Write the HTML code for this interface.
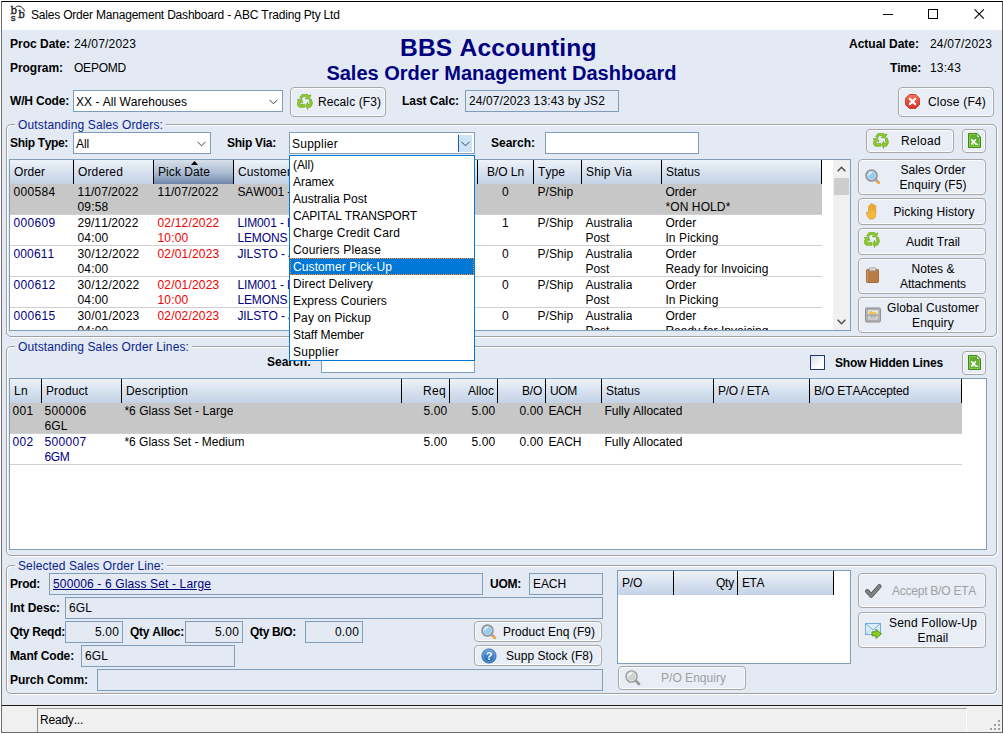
<!DOCTYPE html>
<html><head><meta charset="utf-8"><title>Sales Order Management Dashboard</title>
<style>
*{box-sizing:border-box;margin:0;padding:0}
html,body{width:1003px;height:735px;overflow:hidden;background:#E3EAF4}
body{font-family:"Liberation Sans",Arial,sans-serif;font-size:12px;color:#000;position:relative;font-kerning:none}
.a{position:absolute;white-space:nowrap}
.l{position:absolute;white-space:nowrap;font-weight:bold;line-height:14px}
.t{position:absolute;white-space:nowrap;line-height:14px}
.fld{position:absolute;border:1px solid #7F9DB9;background:#E3EAF4;line-height:14px;padding:3px 0 0 3px;white-space:nowrap;overflow:hidden}
.inp{position:absolute;border:1px solid #7F9DB9;background:#fff;line-height:14px;padding:4px 0 0 2px;white-space:nowrap;overflow:hidden}
.btn{position:absolute;border:1px solid #A8A8A8;border-radius:4px;background:#E8EDF6;white-space:nowrap;box-shadow:inset 0 0 0 1px rgba(255,255,255,.75)}
.btn span.x{position:absolute;line-height:15px;white-space:nowrap}
.btn svg{position:absolute}
.dis{color:#A0A0A0}
.grp{position:absolute;border:1px solid #A0A0A0;border-radius:5px;box-shadow:inset 1px 1px 0 #fff, 1px 1px 0 #fff}
.grp>span.cap{position:absolute;left:8px;top:-7px;background:#E3EAF4;color:#0A1E8C;padding:0 3px 0 3px;line-height:14px;white-space:nowrap}
.grid{position:absolute;background:#fff;border:1px solid #7F9DB9;overflow:hidden}
.hd{position:absolute;top:0;height:24px;background:linear-gradient(#EEF3F9 0%,#D9E3F0 45%,#C3D2E6 100%);border-right:1px solid #000;line-height:14px;padding:5px 0 0 4px;white-space:nowrap;overflow:hidden}
.hd.r{text-align:right;padding:5px 3px 0 0}
.hd.m{text-align:center;padding:5px 0 0 0}
.row{position:absolute;left:0;height:31px;border-bottom:1px solid #D0D0D0}
.c{position:absolute;top:1px;line-height:15px;white-space:nowrap;overflow:hidden;margin-left:-0.6px}
.sel{background:#C7C7C7}
.blue{color:#000080}.red{color:#F00000}
.opt{position:absolute;left:0;width:184px;height:17px;line-height:15px;padding:2px 0 0 3px;white-space:nowrap}
</style></head><body>

<div class="a" style="left:0;top:0;width:1003px;height:735px;background:#fff"></div>
<div class="a" style="left:1px;top:1px;width:1002px;height:732px;background:#E3EAF4;border:1px solid #222;border-color:#000 #5a5a5a #6a6a6a #6e6e6e"></div>
<div class="a" style="left:2px;top:2px;width:1000px;height:28px;background:#fff"></div>
<div class="a" style="left:6px;top:2px;width:26px;height:24px;font-family:'DejaVu Serif',serif;color:#1a1a1a;letter-spacing:0;-webkit-text-stroke:0.35px #1a1a1a">
<span class="a" style="left:4.4px;top:3.2px;font-size:10.2px;line-height:12px">b</span>
<span class="a" style="left:12.3px;top:7.2px;font-size:10.2px;line-height:12px">b</span>
<span class="a" style="left:4.8px;top:10.2px;font-size:9.6px;line-height:11px">s</span>
<svg class="a" style="left:0;top:0" width="26" height="24" viewBox="0 0 26 24"><path d="M9.4 5.4 C11.6 3.2 16.6 3.4 18.6 9.4" fill="none" stroke="#1a1a1a" stroke-width="1"/></svg>
</div>
<div id="title" class="a" style="left:31px;top:8px;font-size:12px;line-height:14px;letter-spacing:-0.2px">Sales Order Management Dashboard - ABC Trading Pty Ltd</div>
<svg class="a" style="left:878px;top:4px" width="116" height="22" viewBox="0 0 116 22">
<path d="M5 10.5h10" stroke="#000" stroke-width="1" fill="none"/>
<rect x="50.5" y="5.5" width="9" height="9" stroke="#000" stroke-width="1" fill="none"/>
<path d="M96.5 5.300l9.400 9.400M105.900 5.300l-9.400 9.400" stroke="#000" stroke-width="1.100" fill="none"/>
</svg>
<div class="l" style="left:10px;top:37px"><span style="letter-spacing:-0.002px">Proc Date:</span></div>
<div class="t" style="left:74px;top:37px"><span style="letter-spacing:0.194px">24/07/2023</span></div>
<div class="l" style="left:10px;top:61px"><span style="letter-spacing:-0.043px">Program:</span></div>
<div class="t" style="left:74px;top:61px"><span style="letter-spacing:-0.223px">OEPOMD</span></div>
<div class="a" id="h1" style="left:0;width:996.7px;top:33px;text-align:center;font-weight:bold;font-size:24.6px;letter-spacing:0.2px;line-height:30px;color:#000080">BBS Accounting</div>
<div class="a" id="h2" style="left:0;width:1002.9px;top:61px;text-align:center;font-weight:bold;font-size:20px;line-height:24px;color:#000080">Sales Order Management Dashboard</div>
<div class="l" style="right:84px;top:37px"><span style="letter-spacing:-0.001px">Actual Date:</span></div>
<div class="t" style="left:930px;top:37px"><span style="letter-spacing:0.194px">24/07/2023</span></div>
<div class="l" style="right:82px;top:61px"><span style="letter-spacing:-0.201px">Time:</span></div>
<div class="t" style="left:930px;top:61px"><span style="letter-spacing:0.194px">13:43</span></div>
<div class="l" style="left:10px;top:94px"><span style="letter-spacing:-0.184px">W/H Code:</span></div>
<div class="inp" style="left:73px;top:90px;width:210px;height:22px;border-color:#7F9DB9"><span style="letter-spacing:0.015px">XX - All Warehouses</span><svg class="a" style="right:4px;top:8px" width="9" height="6" viewBox="0 0 9 6"><path d="M.5.8l4 4 4-4" fill="none" stroke="#444" stroke-width="1"/></svg></div>
<div class="btn" style="left:290px;top:87px;width:96px;height:30px"><svg style="left:6px;top:6px" width="16" height="16" viewBox="0 0 16 16">
<g fill="#8FCB28" stroke="#5E9E14" stroke-width="0.6" stroke-linejoin="round">
<path d="M2.7 3.8L4.6.9Q5 .3 5.7.3H10Q10.8.3 11.2 1l.4.8L14 .9 12.2 5 8 4.6l1.8-1.2-.6-.8H6.2L5 4.6z"/>
<path d="M12.2 5.8l2.1-.9 1 3.7q.3 1.200-.3 2.200L13.600 13.200H10.700v2.200L8.700 11.700l2-3.500v2.100h1.600l.7-1.100z"/>
<path d="M7.700 10.400v2.900H3Q1.600 13.300 1 12L.4 10.400Q0 9.400.6 8.400L1.400 7 .2 5.600l4.600-.1 1.100 3.100L4 8 3 9.800q-.2.600.4.600z"/>
</g></svg><span class="x" style="left:27px;top:7px"><span style="letter-spacing:0.090px">Recalc (F3)</span></span></div>
<div class="l" style="left:402px;top:94px"><span style="letter-spacing:-0.035px">Last Calc:</span></div>
<div class="fld" style="left:465px;top:90px;width:154px;height:22px"><span style="letter-spacing:0.111px">24/07/2023 13:43 by JS2</span></div>
<div class="btn" style="left:898px;top:87px;width:96px;height:30px"><svg style="left:6px;top:6px" width="15" height="15" viewBox="0 0 16 16">
<defs><linearGradient id="cg" x1="0" y1="0" x2="0" y2="1"><stop offset="0" stop-color="#F47A62"/><stop offset=".5" stop-color="#E84A3C"/><stop offset="1" stop-color="#D6322A"/></linearGradient></defs>
<path d="M4.600.6h6.800l4 4v6.800l-4 4H4.600l-4-4V4.600z" fill="url(#cg)" stroke="#C8362C" stroke-width="1"/>
<path d="M5.200 5.200l5.600 5.600M10.800 5.200l-5.600 5.600" stroke="#fff" stroke-width="2.300" stroke-linecap="round"/>
</svg><span class="x" style="left:29px;top:7px"><span style="letter-spacing:0.199px">Close (F4)</span></span></div>
<div class="grp" style="left:6px;top:124px;width:991px;height:213px"><span class="cap"><span style="letter-spacing:0.144px">Outstanding Sales Orders:</span></span></div>
<div class="l" style="left:10px;top:136px"><span style="letter-spacing:-0.334px">Ship Type:</span></div>
<div class="inp" style="left:73px;top:132px;width:138px;height:22px;border-color:#7F9DB9"><span style="letter-spacing:-0.112px">All</span><svg class="a" style="right:4px;top:8px" width="9" height="6" viewBox="0 0 9 6"><path d="M.5.8l4 4 4-4" fill="none" stroke="#444" stroke-width="1"/></svg></div>
<div class="l" style="left:227px;top:136px"><span style="letter-spacing:-0.260px">Ship Via:</span></div>
<div class="inp" style="left:289px;top:132px;width:186px;height:22px;border-color:#7F9DB9"><span style="letter-spacing:0.247px">Supplier</span><div class="a" style="right:2px;top:2px;width:14px;height:17px;background:#CCE4F7;border-left:1px solid #1C5FA8"></div><svg class="a" style="right:4px;top:8px" width="9" height="6" viewBox="0 0 9 6"><path d="M.5.8l4 4 4-4" fill="none" stroke="#444" stroke-width="1"/></svg></div>
<div class="l" style="left:491px;top:136px"><span style="letter-spacing:-0.003px">Search:</span></div>
<div class="inp" style="left:545px;top:132px;width:154px;height:22px"></div>
<div class="btn" style="left:866px;top:129px;width:88px;height:24px"><svg style="left:6px;top:3px" width="16" height="16" viewBox="0 0 16 16">
<g fill="#8FCB28" stroke="#5E9E14" stroke-width="0.6" stroke-linejoin="round">
<path d="M2.7 3.8L4.6.9Q5 .3 5.7.3H10Q10.8.3 11.2 1l.4.8L14 .9 12.2 5 8 4.6l1.8-1.2-.6-.8H6.2L5 4.6z"/>
<path d="M12.2 5.8l2.1-.9 1 3.7q.3 1.200-.3 2.200L13.600 13.200H10.700v2.200L8.700 11.700l2-3.500v2.100h1.600l.7-1.100z"/>
<path d="M7.700 10.400v2.900H3Q1.600 13.300 1 12L.4 10.400Q0 9.400.6 8.400L1.400 7 .2 5.600l4.600-.1 1.100 3.100L4 8 3 9.800q-.2.600.4.600z"/>
</g></svg><span class="x" style="left:34px;top:4px"><span style="letter-spacing:0.329px">Reload</span></span></div>
<div class="btn" style="left:962px;top:129px;width:24px;height:24px"><svg style="left:5px;top:3px" width="13" height="15" viewBox="0 0 13 15">
<path d="M.5.500h8.500l3.500 3.500v10.500H.5z" fill="#64AE30" stroke="#3F8A14" stroke-width="1"/>
<path d="M1.500 1.500h7l3 3v9h-10z" fill="none" stroke="#8FD058" stroke-width=".8"/>
<path d="M8.800.8v3.400h3.400z" fill="#fff" stroke="#3F8A14" stroke-width=".6"/>
<path d="M3.200 6.400l5.200 5M8 6.400l-4.800 4.600" stroke="#fff" stroke-width="1.500" fill="none"/>
<path d="M3 11h3M7.500 11.400h2.800" stroke="#fff" stroke-width="1.200"/>
</svg><span class="x" style="left:0px;top:0px"></span></div>
<div class="btn" style="left:858px;top:159px;width:128px;height:36px"><svg style="left:6px;top:9px" width="16" height="16" viewBox="0 0 16 16">
<path d="M10.500 10.500l3 3" stroke="#A9A9A9" stroke-width="2.800" stroke-linecap="round"/>
<path d="M12.800 12.800l1 1" stroke="#EFA43A" stroke-width="2.600" stroke-linecap="round"/>
<circle cx="6.500" cy="6.500" r="5.400" fill="#DCEBF8" stroke="#949494" stroke-width="1.800"/>
<circle cx="6.500" cy="6.500" r="3.900" fill="#96CBF2"/>
<path d="M3.900 5.800a2.800 2.800 0 0 1 2.600-2.300" stroke="#E4F3FD" stroke-width="1.300" fill="none" stroke-linecap="round"/>
</svg><span class="x" style="left:21px;top:3px;width:106px;text-align:center"><span style="letter-spacing:0.089px">Sales Order</span><br><span style="letter-spacing:0.082px">Enquiry (F5)</span></span></div>
<div class="btn" style="left:858px;top:198px;width:128px;height:27px"><svg style="left:7px;top:4px" width="13" height="17" viewBox="0 0 13 17">
<path d="M2.600 9.500V3.300a.9.900 0 0 1 1.800 0V1.500a.9.900 0 0 1 1.800 0V1.900a.9.900 0 0 1 1.800 0V3.300a.9.900 0 0 1 1.800 0V10.500c0 3.300-1.200 5.700-4.200 5.700-2.200 0-3.200-1-4.200-3L.4 10.500c-.5-1 .5-1.900 1.300-1.100z" fill="#F5B83E" stroke="#D8921E" stroke-width="0.7" stroke-linejoin="round"/>
<path d="M4.400 3.300v4.500M6.200 1.900v5.900M8 3.300v4.500" stroke="#D8921E" stroke-width="0.6" fill="none"/>
</svg><span class="x" style="left:22px;top:6px;width:106px;text-align:center"><span style="letter-spacing:0.110px">Picking History</span></span></div>
<div class="btn" style="left:858px;top:228px;width:128px;height:27px"><svg style="left:5px;top:3px" width="16" height="16" viewBox="0 0 16 16">
<g fill="#8FCB28" stroke="#5E9E14" stroke-width="0.6" stroke-linejoin="round">
<path d="M2.7 3.8L4.6.9Q5 .3 5.7.3H10Q10.8.3 11.2 1l.4.8L14 .9 12.2 5 8 4.6l1.8-1.2-.6-.8H6.2L5 4.6z"/>
<path d="M12.2 5.8l2.1-.9 1 3.7q.3 1.200-.3 2.200L13.600 13.200H10.700v2.200L8.700 11.700l2-3.500v2.100h1.600l.7-1.100z"/>
<path d="M7.700 10.400v2.900H3Q1.600 13.300 1 12L.4 10.400Q0 9.400.6 8.400L1.400 7 .2 5.600l4.600-.1 1.100 3.100L4 8 3 9.800q-.2.600.4.600z"/>
</g></svg><span class="x" style="left:21px;top:6px;width:106px;text-align:center"><span style="letter-spacing:-0.002px">Audit Trail</span></span></div>
<div class="btn" style="left:858px;top:258px;width:128px;height:36px"><svg style="left:7px;top:8px" width="13" height="16" viewBox="0 0 14 16" preserveAspectRatio="none">
<rect x=".5" y="2.5" width="13" height="13" rx="1" fill="#B97C46" stroke="#A06A38" stroke-width="1"/>
<rect x="3.5" y=".8" width="7" height="3" rx=".8" fill="#D9D9D9" stroke="#A0A0A0" stroke-width=".8"/>
<path d="M1.5 4.2v10.4" stroke="#D09A66" stroke-width="1"/>
</svg><span class="x" style="left:21px;top:3px;width:106px;text-align:center"><span style="letter-spacing:0.045px">Notes &amp;</span><br><span style="letter-spacing:-0.063px">Attachments</span></span></div>
<div class="btn" style="left:858px;top:297px;width:128px;height:36px"><svg style="left:6px;top:9px" width="16" height="16" viewBox="0 0 17 16">
<rect x=".5" y=".5" width="16" height="15" rx="1.5" fill="#B5B5B5" stroke="#8C8C8C" stroke-width="1"/>
<rect x="2.5" y="2.5" width="12" height="5" fill="#E8E8E8" stroke="#9A9A9A" stroke-width=".6"/>
<path d="M4.5 4h3l.6 1h4v2h-7.6z" fill="#EDC436"/>
<rect x="2.5" y="8.5" width="12" height="5" fill="#D0D0D0" stroke="#9A9A9A" stroke-width=".6"/>
<rect x="6.5" y="9.5" width="4" height="1.6" fill="#F4F4F4" stroke="#888" stroke-width=".5"/>
</svg><span class="x" style="left:21px;top:3px;width:106px;text-align:center"><span style="letter-spacing:0.131px">Global Customer</span><br><span style="letter-spacing:0.188px">Enquiry</span></span></div>
<div class="grid" style="left:9px;top:159px;width:842px;height:172px">
<div class="hd" style="left:0px;width:64px"><span style="letter-spacing:0.065px">Order</span></div>
<div class="hd" style="left:64px;width:80px"><span style="letter-spacing:0.140px">Ordered</span></div>
<div class="hd" style="left:144px;width:80px;background:linear-gradient(#D8E0EB 0%,#A9BAD0 55%,#6F87AA 100%)"><span style="letter-spacing:0.072px">Pick Date</span></div>
<div class="hd" style="left:224px;width:244px"><span style="letter-spacing:0.123px">Customer</span></div>
<div class="hd m" style="left:468px;width:56px"><span style="letter-spacing:-0.059px">B/O Ln</span></div>
<div class="hd" style="left:524px;width:48px"><span style="letter-spacing:0.081px">Type</span></div>
<div class="hd" style="left:572px;width:80px"><span style="letter-spacing:0.163px">Ship Via</span></div>
<div class="hd" style="left:652px;width:160px"><span style="letter-spacing:-0.003px">Status</span></div>
<svg class="a" style="left:181px;top:1px" width="7" height="4" viewBox="0 0 7 4"><path d="M0 4L3.500 0 7 4z" fill="#000"/></svg>
<div class="row sel" style="top:24px;width:812px">
<div class="c" style="left:4px"><span style="letter-spacing:0.326px">000584</span></div>
<div class="c" style="left:68px"><span style="letter-spacing:0.094px">11/07/2022</span><br><span style="letter-spacing:0.194px">09:58</span></div>
<div class="c" style="left:148px"><span style="letter-spacing:0.094px">11/07/2022</span><br></div>
<div class="c" style="left:228px"><span style="letter-spacing:-0.113px">SAW001 - </span><br></div>
<div class="c" style="left:468px;width:56px;text-align:center">0</div>
<div class="c" style="left:528px"><span style="letter-spacing:0.107px">P/Ship</span></div>
<div class="c" style="left:576px"><br></div>
<div class="c" style="left:656px"><span style="letter-spacing:0.065px">Order</span><br><span style="letter-spacing:0.110px">*ON HOLD*</span></div>
</div>
<div class="row" style="top:55px;width:812px">
<div class="c blue" style="left:4px"><span style="letter-spacing:0.326px">000609</span></div>
<div class="c" style="left:68px"><span style="letter-spacing:0.094px">29/11/2022</span><br><span style="letter-spacing:0.194px">04:00</span></div>
<div class="c red" style="left:148px"><span style="letter-spacing:0.194px">02/12/2022</span><br><span style="letter-spacing:0.194px">10:00</span></div>
<div class="c blue" style="left:228px"><span style="letter-spacing:-0.122px">LIM001 - LIMES</span><br><span style="letter-spacing:-0.113px">LEMONS</span></div>
<div class="c" style="left:468px;width:56px;text-align:center">1</div>
<div class="c" style="left:528px"><span style="letter-spacing:0.107px">P/Ship</span></div>
<div class="c" style="left:576px"><span style="letter-spacing:0.035px">Australia</span><br><span style="letter-spacing:-0.003px">Post</span></div>
<div class="c" style="left:656px"><span style="letter-spacing:0.065px">Order</span><br><span style="letter-spacing:0.097px">In Picking</span></div>
</div>
<div class="row" style="top:86px;width:812px">
<div class="c blue" style="left:4px"><span style="letter-spacing:0.160px">000611</span></div>
<div class="c" style="left:68px"><span style="letter-spacing:0.194px">30/12/2022</span><br><span style="letter-spacing:0.194px">04:00</span></div>
<div class="c red" style="left:148px"><span style="letter-spacing:0.194px">02/01/2023</span><br></div>
<div class="c blue" style="left:228px"><span style="letter-spacing:-0.073px">JILSTO - JILLS</span><br></div>
<div class="c" style="left:468px;width:56px;text-align:center">0</div>
<div class="c" style="left:528px"><span style="letter-spacing:0.107px">P/Ship</span></div>
<div class="c" style="left:576px"><span style="letter-spacing:0.035px">Australia</span><br><span style="letter-spacing:-0.003px">Post</span></div>
<div class="c" style="left:656px"><span style="letter-spacing:0.065px">Order</span><br><span style="letter-spacing:0.015px">Ready for Invoicing</span></div>
</div>
<div class="row" style="top:117px;width:812px">
<div class="c blue" style="left:4px"><span style="letter-spacing:0.326px">000612</span></div>
<div class="c" style="left:68px"><span style="letter-spacing:0.194px">30/12/2022</span><br><span style="letter-spacing:0.194px">04:00</span></div>
<div class="c red" style="left:148px"><span style="letter-spacing:0.194px">02/01/2023</span><br><span style="letter-spacing:0.194px">10:00</span></div>
<div class="c blue" style="left:228px"><span style="letter-spacing:-0.122px">LIM001 - LIMES</span><br><span style="letter-spacing:-0.113px">LEMONS</span></div>
<div class="c" style="left:468px;width:56px;text-align:center">0</div>
<div class="c" style="left:528px"><span style="letter-spacing:0.107px">P/Ship</span></div>
<div class="c" style="left:576px"><span style="letter-spacing:0.035px">Australia</span><br><span style="letter-spacing:-0.003px">Post</span></div>
<div class="c" style="left:656px"><span style="letter-spacing:0.065px">Order</span><br><span style="letter-spacing:0.097px">In Picking</span></div>
</div>
<div class="row" style="top:148px;width:812px">
<div class="c blue" style="left:4px"><span style="letter-spacing:0.326px">000615</span></div>
<div class="c" style="left:68px"><span style="letter-spacing:0.194px">30/01/2023</span><br><span style="letter-spacing:0.194px">04:00</span></div>
<div class="c red" style="left:148px"><span style="letter-spacing:0.194px">02/02/2023</span><br></div>
<div class="c blue" style="left:228px"><span style="letter-spacing:-0.073px">JILSTO - JILLS</span><br></div>
<div class="c" style="left:468px;width:56px;text-align:center">0</div>
<div class="c" style="left:528px"><span style="letter-spacing:0.107px">P/Ship</span></div>
<div class="c" style="left:576px"><span style="letter-spacing:0.035px">Australia</span><br><span style="letter-spacing:-0.003px">Post</span></div>
<div class="c" style="left:656px"><span style="letter-spacing:0.065px">Order</span><br><span style="letter-spacing:0.015px">Ready for Invoicing</span></div>
</div>
<div class="a" style="left:823px;top:0;width:17px;height:170px;background:#F0F0F0"></div>
<div class="a" style="left:824px;top:18px;width:15px;height:17px;background:#CDCDCD"></div>
<svg class="a" style="left:827px;top:6px" width="9" height="6" viewBox="0 0 9 6"><path d="M.7 5.2l3.8-3.9 3.8 3.9" fill="none" stroke="#505050" stroke-width="1.5"/></svg>
<svg class="a" style="left:827px;top:159px" width="9" height="6" viewBox="0 0 9 6"><path d="M.7.8l3.8 3.9L8.3.8" fill="none" stroke="#505050" stroke-width="1.5"/></svg>
</div>
<div class="grp" style="left:6px;top:346px;width:991px;height:210px"><span class="cap"><span style="letter-spacing:0.119px">Outstanding Sales Order Lines:</span></span></div>
<div class="l" style="left:267px;top:355px"><span style="letter-spacing:-0.003px">Search:</span></div>
<div class="inp" style="left:321px;top:351px;width:154px;height:22px"></div>
<div class="a" style="left:810px;top:355px;width:15px;height:15px;background:linear-gradient(135deg,#D8DCE4,#fff 70%);border:1px solid #1C3A6E"></div>
<div class="l" style="left:835px;top:356px"><span style="letter-spacing:-0.157px">Show Hidden Lines</span></div>
<div class="btn" style="left:962px;top:351px;width:24px;height:24px"><svg style="left:5px;top:3px" width="13" height="15" viewBox="0 0 13 15">
<path d="M.5.500h8.500l3.500 3.500v10.500H.5z" fill="#64AE30" stroke="#3F8A14" stroke-width="1"/>
<path d="M1.500 1.500h7l3 3v9h-10z" fill="none" stroke="#8FD058" stroke-width=".8"/>
<path d="M8.800.8v3.400h3.400z" fill="#fff" stroke="#3F8A14" stroke-width=".6"/>
<path d="M3.200 6.400l5.200 5M8 6.400l-4.800 4.600" stroke="#fff" stroke-width="1.500" fill="none"/>
<path d="M3 11h3M7.500 11.400h2.800" stroke="#fff" stroke-width="1.200"/>
</svg><span class="x" style="left:0px;top:0px"></span></div>
<div class="grid" style="left:9px;top:378px;width:978px;height:172px">
<div class="hd" style="left:0px;width:32px"><span style="letter-spacing:0.326px">Ln</span></div>
<div class="hd" style="left:32px;width:80px"><span style="letter-spacing:0.092px">Product</span></div>
<div class="hd" style="left:112px;width:280px"><span style="letter-spacing:0.180px">Description</span></div>
<div class="hd r" style="left:392px;width:48px"><span style="letter-spacing:0.329px">Req</span></div>
<div class="hd r" style="left:440px;width:48px"><span style="letter-spacing:-0.002px">Alloc</span></div>
<div class="hd r" style="left:488px;width:48px"><span style="letter-spacing:-0.224px">B/O</span></div>
<div class="hd" style="left:536px;width:56px"><span style="letter-spacing:-0.332px">UOM</span></div>
<div class="hd" style="left:592px;width:112px"><span style="letter-spacing:-0.003px">Status</span></div>
<div class="hd" style="left:704px;width:96px"><span style="letter-spacing:-0.335px">P/O / ETA</span></div>
<div class="hd" style="left:800px;width:152px"><span style="letter-spacing:-0.158px">B/O ETAAccepted</span></div>
<div class="row sel" style="top:24px;width:952px">
<div class="c" style="left:3px"><span style="letter-spacing:0.326px">001</span></div>
<div class="c" style="left:35px"><span style="letter-spacing:0.326px">500006</span><br><span style="letter-spacing:0.106px">6GL</span></div>
<div class="c" style="left:115px"><span style="letter-spacing:0.047px">*6 Glass Set - Large</span></div>
<div class="c" style="left:392px;width:46px;text-align:right"><span style="letter-spacing:0.161px">5.00</span></div>
<div class="c" style="left:440px;width:46px;text-align:right"><span style="letter-spacing:0.161px">5.00</span></div>
<div class="c" style="left:488px;width:46px;text-align:right"><span style="letter-spacing:0.161px">0.00</span></div>
<div class="c" style="left:539px"><span style="letter-spacing:-0.085px">EACH</span></div>
<div class="c" style="left:595px"><span style="letter-spacing:-0.002px">Fully Allocated</span></div>
</div>
<div class="row" style="top:55px;width:952px">
<div class="c blue" style="left:3px"><span style="letter-spacing:0.326px">002</span></div>
<div class="c blue" style="left:35px"><span style="letter-spacing:0.326px">500007</span><br><span style="letter-spacing:-0.335px">6GM</span></div>
<div class="c" style="left:115px"><span style="letter-spacing:-0.002px">*6 Glass Set - Medium</span></div>
<div class="c" style="left:392px;width:46px;text-align:right"><span style="letter-spacing:0.161px">5.00</span></div>
<div class="c" style="left:440px;width:46px;text-align:right"><span style="letter-spacing:0.161px">5.00</span></div>
<div class="c" style="left:488px;width:46px;text-align:right"><span style="letter-spacing:0.161px">0.00</span></div>
<div class="c" style="left:539px"><span style="letter-spacing:-0.085px">EACH</span></div>
<div class="c" style="left:595px"><span style="letter-spacing:-0.002px">Fully Allocated</span></div>
</div>
</div>
<div class="grp" style="left:6px;top:565px;width:991px;height:129px"><span class="cap"><span style="letter-spacing:0.099px">Selected Sales Order Line:</span></span></div>
<div class="l" style="left:10px;top:577px"><span style="letter-spacing:-0.266px">Prod:</span></div>
<div class="fld" style="left:49px;top:573px;width:434px;height:22px;color:#000080"><span style="text-decoration:underline"><span style="letter-spacing:0.140px">500006 - 6 Glass Set - Large</span></span></div>
<div class="l" style="left:490px;top:577px"><span style="letter-spacing:-0.248px">UOM:</span></div>
<div class="fld" style="left:529px;top:573px;width:74px;height:22px"><span style="letter-spacing:-0.085px">EACH</span></div>
<div class="l" style="left:10px;top:601px"><span style="letter-spacing:-0.075px">Int Desc:</span></div>
<div class="fld" style="left:65px;top:597px;width:538px;height:22px"><span style="letter-spacing:0.106px">6GL</span></div>
<div class="l" style="left:10px;top:625px"><span style="letter-spacing:-0.259px">Qty Reqd:</span></div>
<div class="fld" style="left:65px;top:621px;width:58px;height:22px;text-align:right;padding-right:3px"><span style="letter-spacing:0.161px">5.00</span></div>
<div class="l" style="left:130px;top:625px"><span style="letter-spacing:-0.267px">Qty Alloc:</span></div>
<div class="fld" style="left:185px;top:621px;width:58px;height:22px;text-align:right;padding-right:3px"><span style="letter-spacing:0.161px">5.00</span></div>
<div class="l" style="left:250px;top:625px"><span style="letter-spacing:-0.333px">Qty B/O:</span></div>
<div class="fld" style="left:305px;top:621px;width:58px;height:22px;text-align:right;padding-right:3px"><span style="letter-spacing:0.161px">0.00</span></div>
<div class="l" style="left:10px;top:649px"><span style="letter-spacing:-0.133px">Manf Code:</span></div>
<div class="fld" style="left:81px;top:645px;width:154px;height:22px"><span style="letter-spacing:0.106px">6GL</span></div>
<div class="l" style="left:10px;top:673px"><span style="letter-spacing:-0.061px">Purch Comm:</span></div>
<div class="fld" style="left:97px;top:669px;width:506px;height:22px"></div>
<div class="btn" style="left:474px;top:621px;width:128px;height:21px"><svg style="left:6px;top:2px" width="16" height="16" viewBox="0 0 16 16">
<path d="M10.500 10.500l3 3" stroke="#A9A9A9" stroke-width="2.800" stroke-linecap="round"/>
<path d="M12.800 12.800l1 1" stroke="#EFA43A" stroke-width="2.600" stroke-linecap="round"/>
<circle cx="6.500" cy="6.500" r="5.400" fill="#DCEBF8" stroke="#949494" stroke-width="1.800"/>
<circle cx="6.500" cy="6.500" r="3.900" fill="#96CBF2"/>
<path d="M3.900 5.800a2.800 2.800 0 0 1 2.600-2.300" stroke="#E4F3FD" stroke-width="1.300" fill="none" stroke-linecap="round"/>
</svg><span class="x" style="left:28px;top:3px"><span style="letter-spacing:0.039px">Product Enq (F9)</span></span></div>
<div class="btn" style="left:474px;top:645px;width:128px;height:21px"><svg style="left:6px;top:2px" width="16" height="16" viewBox="0 0 16 16">
<defs><linearGradient id="hg" x1="0" y1="0" x2="0" y2="1"><stop offset="0" stop-color="#5FA2E2"/><stop offset="1" stop-color="#1F5FAE"/></linearGradient></defs>
<circle cx="8" cy="8" r="7.100" fill="url(#hg)" stroke="#2A62A6" stroke-width="0.800"/>
<circle cx="8" cy="8" r="5.900" fill="none" stroke="#7DB4EA" stroke-width="0.700"/>
<text x="8" y="12" text-anchor="middle" font-family="Liberation Sans" font-weight="bold" font-size="11" fill="#fff">?</text>
</svg><span class="x" style="left:31px;top:3px"><span style="letter-spacing:0.020px">Supp Stock (F8)</span></span></div>
<div class="grid" style="left:617px;top:570px;width:234px;height:94px">
<div class="hd" style="left:0px;width:56px"><span style="letter-spacing:-0.224px">P/O</span></div>
<div class="hd r" style="left:56px;width:64px"><span style="letter-spacing:-0.223px">Qty</span></div>
<div class="hd" style="left:120px;width:96px"><span style="letter-spacing:-0.446px">ETA</span></div>
</div>
<div class="btn dis" style="left:618px;top:666px;width:128px;height:24px"><svg style="left:6px;top:3px" width="16" height="16" viewBox="0 0 16 16">
<path d="M10 10l4 4" stroke="#9A9A9A" stroke-width="2.8" stroke-linecap="round"/>
<circle cx="6.5" cy="6.5" r="5.6" fill="#E6E6E6" stroke="#9A9A9A" stroke-width="1.4"/>
<circle cx="6.5" cy="6.5" r="4" fill="#D2D2D2"/>
<path d="M3.8 5.8a3 3 0 0 1 2.8-2.4" stroke="#fff" stroke-width="1.2" fill="none" stroke-linecap="round"/>
</svg><span class="x" style="left:42px;top:4px"><span style="letter-spacing:0.028px">P/O Enquiry</span></span></div>
<div class="btn dis" style="left:858px;top:573px;width:128px;height:35px"><svg style="left:6px;top:9px" width="17" height="17" viewBox="0 0 19 19">
<path d="M2.600 9.200L7 14.200 16 3.800" fill="none" stroke="#555" stroke-width="4.800" stroke-linecap="round" stroke-linejoin="round"/>
<path d="M2.600 9.200L7 14.200 16 3.800" fill="none" stroke="#8E8E8E" stroke-width="2.800" stroke-linecap="round" stroke-linejoin="round"/>
<path d="M2.600 9.200L7 14.200 16 3.800" fill="none" stroke="#6A6A6A" stroke-width="0.800" stroke-linecap="round" stroke-linejoin="round"/>
</svg><span class="x" style="left:33px;top:10px"><span style="letter-spacing:-0.240px">Accept B/O ETA</span></span></div>
<div class="btn" style="left:858px;top:612px;width:128px;height:36px"><svg style="left:6px;top:10px" width="17" height="16" viewBox="0 0 17 16">
<rect x=".5" y=".5" width="15" height="11" fill="#DCEEFC" stroke="#74ABDF" stroke-width="1"/>
<path d="M.8.8l7.2 6 7.2-6" fill="none" stroke="#74ABDF" stroke-width="1"/>
<path d="M.8 11.2l5.4-5M15.2 11.2l-5.4-5" fill="none" stroke="#9CC4E8" stroke-width=".8"/>
<path d="M7 8.800h4V6.200l5.400 4.600L11 15.400V12.800H7z" fill="#8ECB24" stroke="#4A9412" stroke-width=".9" stroke-linejoin="round"/>
</svg><span class="x" style="left:24px;top:3px;width:100px;text-align:center"><span style="letter-spacing:0.188px">Send Follow-Up</span><br><span style="letter-spacing:0.199px">Email</span></span></div>
<div class="a" style="left:2px;top:705px;width:1000px;height:1px;background:#1a1a1a"></div>
<div class="a" style="left:2px;top:706px;width:1000px;height:26px;background:#F0F0F0"></div>
<div class="a" style="left:37px;top:708px;width:930px;height:24px;border-left:1px solid #8C8C8C;border-top:1px solid #A0A0A0;border-right:1px solid #fff"></div>
<div class="t" style="left:40px;top:713px"><span style="letter-spacing:-0.211px">Ready...</span></div>
<svg class="a" style="left:989px;top:719px" width="12" height="12" viewBox="0 0 12 12"><g fill="#A0A0A0">
<rect x="9" y="1" width="2" height="2"/><rect x="9" y="5" width="2" height="2"/><rect x="5" y="5" width="2" height="2"/>
<rect x="9" y="9" width="2" height="2"/><rect x="5" y="9" width="2" height="2"/><rect x="1" y="9" width="2" height="2"/></g></svg>
<div class="a" style="left:289px;top:155px;width:186px;height:206px;background:#fff;border:1px solid #0078D7">
<div class="opt" style="top:0px"><span style="letter-spacing:-0.066px">(All)</span></div>
<div class="opt" style="top:17px"><span style="letter-spacing:-0.057px">Aramex</span></div>
<div class="opt" style="top:34px"><span style="letter-spacing:-0.002px">Australia Post</span></div>
<div class="opt" style="top:51px"><span style="letter-spacing:-0.197px">CAPITAL TRANSPORT</span></div>
<div class="opt" style="top:68px"><span style="letter-spacing:0.164px">Charge Credit Card</span></div>
<div class="opt" style="top:85px"><span style="letter-spacing:0.175px">Couriers Please</span></div>
<div class="opt" style="top:102px;background:#0078D7;color:#fff;outline:1px dotted #FF8728;outline-offset:-1px"><span style="letter-spacing:0.103px">Customer Pick-Up</span></div>
<div class="opt" style="top:119px"><span style="letter-spacing:0.133px">Direct Delivery</span></div>
<div class="opt" style="top:136px"><span style="letter-spacing:0.123px">Express Couriers</span></div>
<div class="opt" style="top:153px"><span style="letter-spacing:0.099px">Pay on Pickup</span></div>
<div class="opt" style="top:170px"><span style="letter-spacing:-0.085px">Staff Member</span></div>
<div class="opt" style="top:187px"><span style="letter-spacing:0.247px">Supplier</span></div>
</div>
</body></html>
